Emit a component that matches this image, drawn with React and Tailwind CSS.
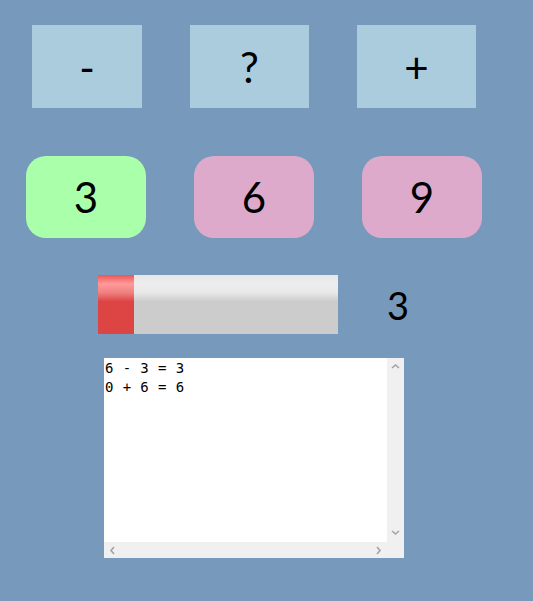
import React from "react";

const ops = ["-", "?", "+"];
const nums = [
  { n: 3, bg: "bg-[#aaffaa]" },
  { n: 6, bg: "bg-[#ddaacc]" },
  { n: 9, bg: "bg-[#ddaacc]" },
];

const Chevron = ({ d }) => (
  <svg width="9" height="9" viewBox="0 0 9 9" className="block">
    <path d={d} fill="none" stroke="#a3a3a3" strokeWidth="1.6" />
  </svg>
);

const App = () => {
  return (
    <div className="w-[533px] h-[601px] bg-[#7799bb] font-['Lato','Open_Sans',sans-serif] text-black pt-[25px]">
      {/* operator buttons */}
      <div className="flex pl-[32px] gap-[48px]">
        {ops.map((o, i) => (
          <div
            key={o}
            className={`${i === 0 ? "w-[110px]" : "w-[119px]"} h-[83px] bg-[#aaccdd] flex items-center justify-center text-[42px] leading-none`}
          >
            {o}
          </div>
        ))}
      </div>

      {/* number buttons */}
      <div className="flex pl-[26px] gap-[48px] mt-[48px]">
        {nums.map((x) => (
          <div
            key={x.n}
            className={`w-[120px] h-[82px] ${x.bg} rounded-[20px] flex items-center justify-center text-[42px] leading-none`}
          >
            {x.n}
          </div>
        ))}
      </div>

      {/* progress */}
      <div className="flex items-center pl-[98px] mt-[37px]">
        <div className="w-[240px] h-[59px] flex bg-[linear-gradient(to_bottom,#e6e6e6_0%,#ededed_15%,#e8e8e8_30%,#cccccc_45%,#cccccc_100%)]">
          <div className="w-[36px] h-full bg-[linear-gradient(to_bottom,#ee5555_0%,#ff9a9a_15%,#f08080_30%,#dd4444_45%,#dd4444_100%)]" />
        </div>
        <div className="ml-[49px] text-[38px] leading-none">3</div>
      </div>

      {/* log */}
      <div className="ml-[104px] mt-[24px] w-[300px] h-[200px] bg-white flex">
        <div className="flex-1 flex flex-col">
          <div className="flex-1 font-['DejaVu_Sans_Mono','Liberation_Mono',monospace] text-[14px] tracking-[0.4px] leading-[19px] pl-[1px] pt-[1px]">
            <div>6 - 3 = 3</div>
            <div>0 + 6 = 6</div>
          </div>
          <div className="h-[16px] bg-[#f0f0f0] flex items-center justify-between px-[4px]">
            <Chevron d="M6 1 L3 4.5 L6 8" />
            <Chevron d="M3 1 L6 4.5 L3 8" />
          </div>
        </div>
        <div className="w-[17px] bg-[#f0f0f0] flex flex-col items-center justify-between pt-[4px] pb-[21px]">
          <Chevron d="M1 6 L4.5 3 L8 6" />
          <Chevron d="M1 3 L4.5 6 L8 3" />
        </div>
      </div>
    </div>
  );
};

export default App;
